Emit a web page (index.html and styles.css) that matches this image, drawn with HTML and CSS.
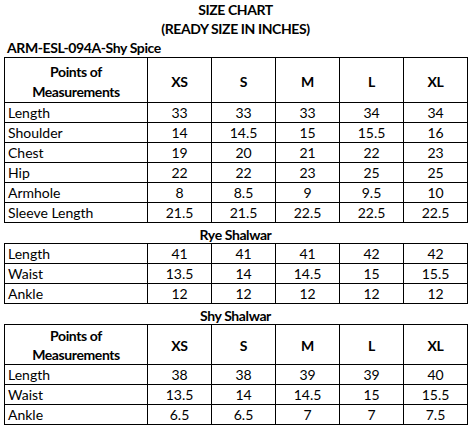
FILE: index.html
```html
<!DOCTYPE html>
<html>
<head>
<meta charset="utf-8">
<link rel="stylesheet" href="styles.css">
</head>
<body>
<div class="sheet">
  <div class="title">SIZE CHART</div>
  <div class="title">(READY SIZE IN INCHES)</div>
  <div class="code">ARM-ESL-094A-Shy Spice</div>
  <table class="chart">
    <colgroup><col class="c-name"><col class="c-size"><col class="c-size"><col class="c-size"><col class="c-size"><col class="c-size"></colgroup>
    <tr class="head tall"><th>Points of<br>Measurements</th><th>XS</th><th>S</th><th>M</th><th>L</th><th>XL</th></tr>
    <tr><td>Length</td><td>33</td><td>33</td><td>33</td><td>34</td><td>34</td></tr>
    <tr><td>Shoulder</td><td>14</td><td>14.5</td><td>15</td><td>15.5</td><td>16</td></tr>
    <tr><td>Chest</td><td>19</td><td>20</td><td>21</td><td>22</td><td>23</td></tr>
    <tr><td>Hip</td><td>22</td><td>22</td><td>23</td><td>25</td><td>25</td></tr>
    <tr><td>Armhole</td><td>8</td><td>8.5</td><td>9</td><td>9.5</td><td>10</td></tr>
    <tr><td>Sleeve Length</td><td>21.5</td><td>21.5</td><td>22.5</td><td>22.5</td><td>22.5</td></tr>
  </table>
  <div class="caption">Rye Shalwar</div>
  <table class="chart">
    <colgroup><col class="c-name"><col class="c-size"><col class="c-size"><col class="c-size"><col class="c-size"><col class="c-size"></colgroup>
    <tr><td>Length</td><td>41</td><td>41</td><td>41</td><td>42</td><td>42</td></tr>
    <tr><td>Waist</td><td>13.5</td><td>14</td><td>14.5</td><td>15</td><td>15.5</td></tr>
    <tr><td>Ankle</td><td>12</td><td>12</td><td>12</td><td>12</td><td>12</td></tr>
  </table>
  <div class="caption">Shy Shalwar</div>
  <table class="chart">
    <colgroup><col class="c-name"><col class="c-size"><col class="c-size"><col class="c-size"><col class="c-size"><col class="c-size"></colgroup>
    <tr class="head"><th>Points of<br>Measurements</th><th>XS</th><th>S</th><th>M</th><th>L</th><th>XL</th></tr>
    <tr><td>Length</td><td>38</td><td>38</td><td>39</td><td>39</td><td>40</td></tr>
    <tr><td>Waist</td><td>13.5</td><td>14</td><td>14.5</td><td>15</td><td>15.5</td></tr>
    <tr><td>Ankle</td><td>6.5</td><td>6.5</td><td>7</td><td>7</td><td>7.5</td></tr>
  </table>
</div>
</body>
</html>
```

FILE: styles.css
```css
html, body {
  margin: 0;
  padding: 0;
  background: #ffffff;
}
body {
  font-family: Lato, "Open Sans", "Liberation Sans", sans-serif;
  font-size: 14px;
  color: #000000;
}
.sheet {
  width: 472px;
  padding-left: 4px;
  box-sizing: border-box;
}
.title {
  width: 463px;
  text-align: center;
  font-weight: bold;
  letter-spacing: -0.4px;
  height: 19px;
  line-height: 19px;
}
.code {
  font-weight: bold;
  letter-spacing: -0.4px;
  height: 19px;
  line-height: 19px;
  padding-left: 3px;
}
.caption {
  width: 463px;
  text-align: center;
  font-weight: bold;
  letter-spacing: -0.4px;
  height: 20px;
  line-height: 17px;
  padding-top: 3px;
  box-sizing: border-box;
}
.chart {
  border-collapse: collapse;
  table-layout: fixed;
  width: 463px;
}
.c-name { width: 143px; }
.c-size { width: 64px; }
.chart td, .chart th {
  border: 1px solid #000000;
  padding: 0;
  height: 19px;
  line-height: 19px;
  text-align: center;
  white-space: nowrap;
  overflow: hidden;
}
.chart td:first-child {
  text-align: left;
  padding-left: 3px;
}
.chart th {
  font-weight: bold;
  letter-spacing: -0.4px;
  height: 39px;
  line-height: 19px;
  padding-top: 1px;
  box-sizing: border-box;
}
.chart .tall th {
  height: 45px;
  line-height: 20px;
  padding-top: 4px;
}
```
